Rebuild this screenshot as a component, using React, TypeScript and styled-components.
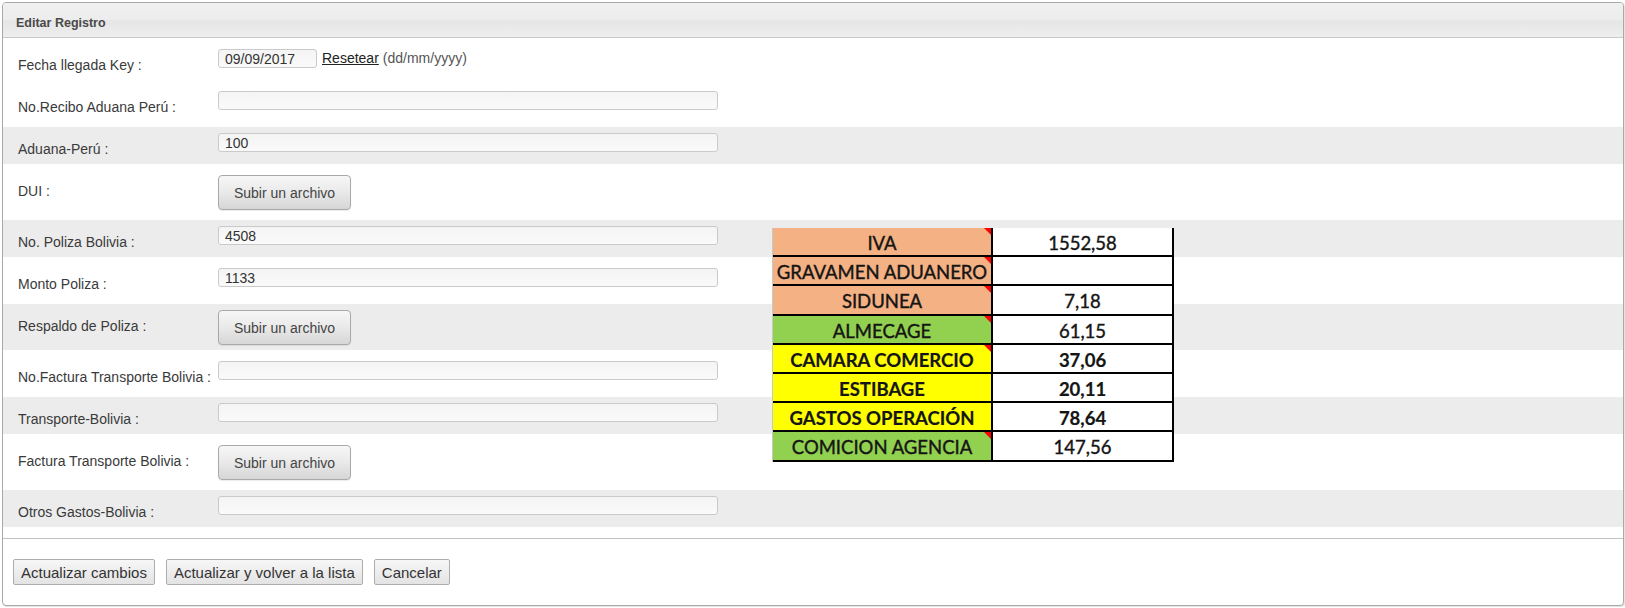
import React from "react";
import styled, { createGlobalStyle } from "styled-components";

const GlobalStyle = createGlobalStyle`
  html, body {
    margin: 0;
    padding: 0;
    background: #ffffff;
  }
  body {
    font-family: "Liberation Sans", Arial, sans-serif;
    font-size: 14px;
    color: #333;
  }
`;

const Page = styled.div`
  padding: 2px 1px 1px 2px;
`;

const Panel = styled.section`
  border: 1px solid #a9a9a9;
  border-radius: 4px;
  box-shadow: 1px 1px 1px rgba(0, 0, 0, 0.12);
  overflow: hidden;
  background: #fff;
`;

const Header = styled.div`
  box-sizing: border-box;
  height: 35px;
  padding: 12px 0 0 13px;
  border-bottom: 1px solid #c9c9c9;
  background: linear-gradient(
    to bottom,
    #f0f0f0 0%,
    #ededed 48%,
    #e6e6e6 52%,
    #eeeeee 100%
  );
  font-family: "Liberation Sans", Arial, sans-serif;
  font-weight: 700;
  font-size: 12.5px;
  line-height: 16px;
  color: #4a4a4a;
`;

const Body = styled.div`
  position: relative;
  display: flex;
  flex-direction: column;
  gap: 5px;
  padding: 5px 0 11px;
`;

const Row = styled.div<{ $shaded?: boolean }>`
  display: flex;
  align-items: flex-start;
  padding: 5px 0 5px 15px;
  background: ${(p) => (p.$shaded ? "#ececec" : "transparent")};
`;

const Label = styled.label`
  width: 200px;
  flex: none;
  padding-top: 7px;
  line-height: 20px;
  color: #3a3a3a;
  white-space: nowrap;
`;

const Control = styled.div`
  display: flex;
  align-items: center;
  margin-top: 1px;
`;

const TextInput = styled.input<{ $w?: number }>`
  box-sizing: border-box;
  width: ${(p) => p.$w ?? 500}px;
  height: 19px;
  margin: 0;
  padding: 0 6px;
  border: 1px solid #cacaca;
  border-radius: 3px;
  background: linear-gradient(to bottom, #f4f4f4, #fafafa);
  font-family: "Liberation Sans", Arial, sans-serif;
  font-size: 14px;
  color: #333;
  outline: none;
`;

const ResetLink = styled.a`
  margin-left: 5px;
  color: #222;
  text-decoration: underline;
  line-height: 19px;
`;

const Hint = styled.span`
  margin-left: 4px;
  color: #555;
  line-height: 19px;
`;

const FileButton = styled.button`
  box-sizing: border-box;
  width: 133px;
  height: 35px;
  border: 1px solid #a9a9a9;
  border-radius: 4px;
  background: linear-gradient(to bottom, #f7f7f7 0%, #e9e9e9 50%, #d6d6d6 100%);
  box-shadow: 0 1px 1px rgba(0, 0, 0, 0.08);
  font-family: "Liberation Sans", Arial, sans-serif;
  font-size: 14px;
  color: #444;
  padding: 0;
`;

const Footer = styled.div`
  display: flex;
  gap: 11px;
  padding: 20px 10px 20px;
  border-top: 1px solid #c2c2c2;
`;

const ActionButton = styled.button`
  box-sizing: border-box;
  height: 26px;
  padding: 0 7px;
  border: 1px solid #adadad;
  border-radius: 2px;
  background: linear-gradient(to bottom, #f7f7f7, #e3e3e3);
  font-family: "Liberation Sans", Arial, sans-serif;
  font-size: 15px;
  color: #333;
`;

/* pasted spreadsheet excerpt lying over the form rows */
const Sheet = styled.div`
  position: absolute;
  top: 190px;
  left: 769px;
  width: 403px;
  border-left: 1px solid #c8c8c8;
  font-family: Lato, "Open Sans", sans-serif;
  font-size: 18.5px;
  color: #151515;
`;

const SheetRow = styled.div`
  display: grid;
  grid-template-columns: 220px 181px;
  height: 29.2px;
`;

const fills: Record<string, string> = {
  salmon: "#f4b183",
  green: "#92d050",
  yellow: "#ffff00",
};

const cellText = (bold?: boolean) => `
  box-sizing: border-box;
  padding-top: 3px;
  line-height: 24px;
  text-align: center;
  white-space: nowrap;
  font-weight: ${bold ? 700 : 400};
  -webkit-text-stroke: ${bold ? "0.2px" : "0.4px"} #151515;
  border-bottom: 2px solid #000;
  border-right: 2px solid #000;
`;

const NameCell = styled.div<{ $fill: string; $bold?: boolean; $note?: boolean }>`
  position: relative;
  background: ${(p) => fills[p.$fill]};
  ${(p) => cellText(p.$bold)}

  &::after {
    content: "";
    display: ${(p) => (p.$note ? "block" : "none")};
    position: absolute;
    top: 0;
    right: 0;
    border-left: 7px solid transparent;
    border-top: 7px solid #ff0000;
  }
`;

const ValueCell = styled.div<{ $bold?: boolean }>`
  background: #fff;
  ${(p) => cellText(p.$bold)}
`;

type Field =
  | { label: string; kind: "text"; value?: string }
  | { label: string; kind: "date"; value: string }
  | { label: string; kind: "file" };

const fields: Field[] = [
  { label: "Fecha llegada Key :", kind: "date", value: "09/09/2017" },
  { label: "No.Recibo Aduana Perú :", kind: "text" },
  { label: "Aduana-Perú :", kind: "text", value: "100" },
  { label: "DUI :", kind: "file" },
  { label: "No. Poliza Bolivia :", kind: "text", value: "4508" },
  { label: "Monto Poliza :", kind: "text", value: "1133" },
  { label: "Respaldo de Poliza :", kind: "file" },
  { label: "No.Factura Transporte Bolivia :", kind: "text" },
  { label: "Transporte-Bolivia :", kind: "text" },
  { label: "Factura Transporte Bolivia :", kind: "file" },
  { label: "Otros Gastos-Bolivia :", kind: "text" },
];

const sheet = [
  { name: "IVA", value: "1552,58", fill: "salmon", note: true },
  { name: "GRAVAMEN ADUANERO", value: "", fill: "salmon", note: true },
  { name: "SIDUNEA", value: "7,18", fill: "salmon", note: true },
  { name: "ALMECAGE", value: "61,15", fill: "green", note: true },
  { name: "CAMARA COMERCIO", value: "37,06", fill: "yellow", note: true, bold: true },
  { name: "ESTIBAGE", value: "20,11", fill: "yellow", bold: true },
  { name: "GASTOS OPERACIÓN", value: "78,64", fill: "yellow", bold: true },
  { name: "COMICION AGENCIA", value: "147,56", fill: "green", note: true },
];

function renderControl(f: Field) {
  if (f.kind === "file") return <FileButton type="button">Subir un archivo</FileButton>;
  if (f.kind === "date")
    return (
      <>
        <TextInput $w={99} defaultValue={f.value} />
        <ResetLink href="#">Resetear</ResetLink>
        <Hint>(dd/mm/yyyy)</Hint>
      </>
    );
  return <TextInput defaultValue={f.value ?? ""} />;
}

export default function App() {
  return (
    <Page>
      <GlobalStyle />
      <Panel>
        <Header>Editar Registro</Header>
        <Body>
          {fields.map((f, i) => (
            <Row key={f.label} $shaded={i >= 2 && i % 2 === 0}>
              <Label>{f.label}</Label>
              <Control>{renderControl(f)}</Control>
            </Row>
          ))}

          <Sheet>
            {sheet.map((r) => (
              <SheetRow key={r.name}>
                <NameCell $fill={r.fill} $bold={r.bold} $note={r.note}>
                  {r.name}
                </NameCell>
                <ValueCell $bold={r.bold}>{r.value}</ValueCell>
              </SheetRow>
            ))}
          </Sheet>
        </Body>
        <Footer>
          <ActionButton type="button">Actualizar cambios</ActionButton>
          <ActionButton type="button">Actualizar y volver a la lista</ActionButton>
          <ActionButton type="button">Cancelar</ActionButton>
        </Footer>
      </Panel>
    </Page>
  );
}
